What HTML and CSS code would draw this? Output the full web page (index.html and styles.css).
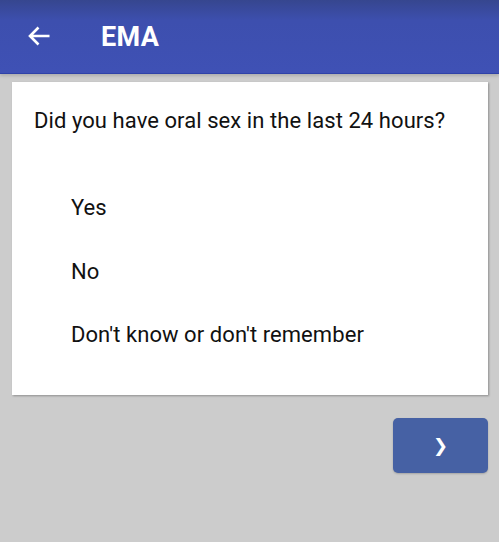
FILE: index.html
```html
<!DOCTYPE html>
<html lang="en">
<head>
    <meta charset="UTF-8">
    <meta name="viewport" content="width=device-width, initial-scale=1.0">
    <title>EMA</title>
    <link rel="stylesheet" href="styles.css">
</head>
<body>
    <header class="app-bar">
        <button class="back-btn" aria-label="Back">
            <svg width="24" height="20" viewBox="0 0 24 20">
                <path d="M22.5 10H3 M11.5 1.5L3 10l8.5 8.5" fill="none" stroke="#fff" stroke-width="2.6"/>
            </svg>
        </button>
        <h1>EMA</h1>
    </header>

    <main class="content">
        <section class="card">
            <p class="question">Did you have oral sex in the last 24 hours?</p>
            <ul class="options">
                <li>Yes</li>
                <li>No</li>
                <li>Don't know or don't remember</li>
            </ul>
        </section>

        <div class="actions">
            <button class="next-btn">&#10095;</button>
        </div>
    </main>
</body>
</html>
```

FILE: styles.css
```css
body {
    margin: 0;
    background: #cccccc;
    font-family: Roboto, "Noto Sans", sans-serif;
    min-height: 100vh;
}

.app-bar {
    height: 73px;
    display: flex;
    align-items: center;
    background: linear-gradient(to bottom, #36468f 0%, #3d4fae 28%, #3f51b5 100%);
    border-bottom: 1px solid #2f42a8;
    box-shadow: 0 2px 3px rgba(0,0,0,0.15);
}

.back-btn {
    background: none;
    border: none;
    padding: 0;
    margin: -2px 0 0 27px;
    width: 24px;
    height: 20px;
    display: flex;
}

h1 {
    margin: 0 0 0 50px;
    color: #fff;
    font-size: 27px;
    font-weight: bold;
    letter-spacing: 0.3px;
}

.content {
    padding: 8px 11px 0 12px;
}

.card {
    background: #fff;
    padding: 25px 22px 24px 22px;
    box-shadow: 1px 1px 2px rgba(0,0,0,0.3);
}

.question {
    margin: 0;
    font-size: 22px;
    line-height: 28px;
    color: #111;
    letter-spacing: 0.07px;
}

.options {
    list-style: none;
    margin: 59px 0 0;
    padding: 0 0 0 37px;
}

.options li {
    font-size: 22px;
    line-height: 28px;
    color: #111;
    letter-spacing: 0.07px;
    margin-bottom: 35.5px;
}

.options li:last-child {
    margin-bottom: 22px;
}

.actions {
    display: flex;
    justify-content: flex-end;
    margin-top: 23px;
}

.next-btn {
    width: 95px;
    height: 55px;
    background: #4661a4;
    border: none;
    border-radius: 5px;
    color: #fff;
    font-size: 18px;
    font-weight: bold;
    font-family: "DejaVu Sans", sans-serif;
    box-shadow: 0 1px 2px rgba(0,0,0,0.2);
}
```
